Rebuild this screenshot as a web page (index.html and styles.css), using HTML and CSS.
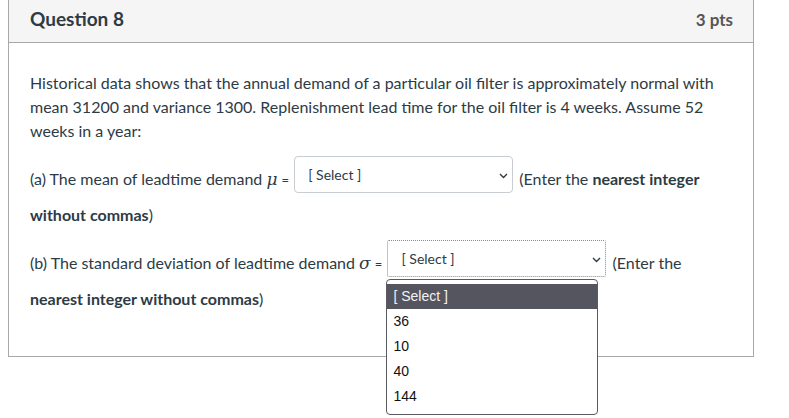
FILE: index.html
```html
<!DOCTYPE html>
<html lang="en">
<head>
<meta charset="utf-8">
<title>Question 8</title>
<link rel="stylesheet" href="styles.css">
</head>
<body>
<div class="card">
  <div class="card-header">
    <span class="q-title">Question 8</span>
    <span class="q-pts">3 pts</span>
  </div>
  <div class="card-body">
    <p>Historical data shows that the annual demand of a particular oil filter is approximately normal with mean 31200 and variance 1300. Replenishment lead time for the oil filter is 4 weeks. Assume 52 weeks in a year:</p>
    <p>(a) The mean of leadtime demand <span class="math"><span class="mi">μ</span> <span class="mo">=</span></span> <span class="select">[ Select ]<svg class="chev" width="9" height="6" viewBox="0 0 9 6"><polyline points="1,1 4.5,4.5 8,1" fill="none" stroke="#2d3b45" stroke-width="1.4"/></svg></span> (Enter the <strong>nearest integer without commas</strong>)</p>
    <p>(b) The standard deviation of leadtime demand <span class="math"><span class="mi">σ</span> <span class="mo">=</span></span> <span class="select focus">[ Select ]<svg class="chev" width="9" height="6" viewBox="0 0 9 6"><polyline points="1,1 4.5,4.5 8,1" fill="none" stroke="#2d3b45" stroke-width="1.4"/></svg><span class="dropdown"><span class="opt active">[ Select ]</span><span class="opt">36</span><span class="opt">10</span><span class="opt">40</span><span class="opt">144</span></span></span> (Enter the <strong>nearest integer without commas</strong>)</p>
  </div>
</div>
</body>
</html>
```
FILE: styles.css
```css
html {
  height: 100%;
}

body {
  margin: 0;
  padding: 0 8px;
  min-height: 100%;
  box-sizing: border-box;
  background: #ffffff;
  color: #2d3b45;
  font-family: Lato, "Noto Sans", sans-serif;
}

.card {
  width: 746px;
  box-sizing: border-box;
  border: 1px solid #a8a8a8;
  border-top: none;
}

.card-header {
  height: 43px;
  box-sizing: border-box;
  padding: 7px 20px 0 21px;
  background: #f5f5f5;
  border-bottom: 1px solid #a8a8a8;
  display: flex;
  justify-content: space-between;
  align-items: baseline;
}

.q-title {
  font-size: 19px;
  font-weight: 700;
  color: #2d3b45;
}

.q-pts {
  font-size: 17px;
  font-weight: 700;
  color: #555555;
}

.card-body {
  padding: 16px 21px 33px 21px;
}

.card-body p {
  margin: 12px 0;
  font-size: 16px;
  line-height: 24px;
}

.card-body strong {
  font-weight: 700;
}

.math {
  white-space: nowrap;
}

.mi {
  font-family: "DejaVu Serif", "Liberation Serif", serif;
  font-style: italic;
  font-size: 17px;
}

.mo {
  font-size: 13px;
}

.select {
  position: relative;
  display: inline-block;
  box-sizing: border-box;
  width: 219px;
  height: 37px;
  margin: 1px 2px 10px 1px;
  padding: 0 30px 0 13px;
  border: 1px solid #c7cdd1;
  border-radius: 4px;
  background: #ffffff;
  font-size: 14px;
  line-height: 35px;
  color: #2d3b45;
  vertical-align: 5px;
  white-space: nowrap;
}

.select.focus {
  border: 1px dotted #8a8a8a;
  border-radius: 2px;
}

.chev {
  position: absolute;
  right: 4px;
  top: 16px;
}

.dropdown {
  position: absolute;
  z-index: 10;
  left: -2px;
  top: calc(100% + 3px);
  width: 212px;
  box-sizing: border-box;
  padding: 4px 0 5px 0;
  border: 1px solid #5a5a60;
  border-radius: 4px;
  background: #ffffff;
  font-family: "Liberation Sans", Arial, sans-serif;
  font-size: 14px;
  line-height: 25px;
  color: #111111;
}

.opt {
  display: block;
  height: 25px;
  padding-left: 6px;
}

.opt.active {
  background: #55555f;
  color: #f2f2f2;
}
```
